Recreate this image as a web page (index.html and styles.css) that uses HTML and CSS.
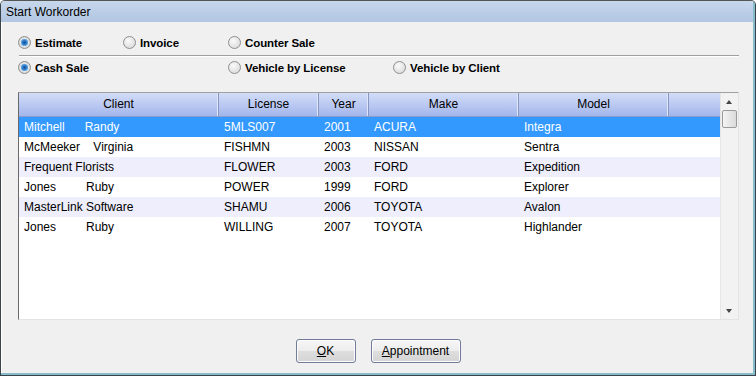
FILE: index.html
```html
<!DOCTYPE html>
<html lang="en">
<head>
  <meta charset="UTF-8" />
  <title>Start Workorder</title>
  <link rel="stylesheet" href="styles.css">
</head>
<body>
  <div class="window">
    <div class="titlebar">Start Workorder</div>

    <div class="client">
      <!-- Workorder type -->
      <div class="radio-row">
        <label class="radio w105"><span class="dot checked"></span>Estimate</label>
        <label class="radio w105"><span class="dot"></span>Invoice</label>
        <label class="radio"><span class="dot"></span>Counter Sale</label>
      </div>
      <div class="separator"></div>
      <div class="radio-row">
        <label class="radio w210"><span class="dot checked"></span>Cash Sale</label>
        <label class="radio w165"><span class="dot"></span>Vehicle by License</label>
        <label class="radio"><span class="dot"></span>Vehicle by Client</label>
      </div>

      <!-- Client list -->
      <div class="list">
        <div class="list-main">
          <div class="row header">
            <div class="c-client">Client</div>
            <div class="c-license">License</div>
            <div class="c-year">Year</div>
            <div class="c-make">Make</div>
            <div class="c-model">Model</div>
            <div class="c-fill"></div>
          </div>
          <div class="row selected">
            <div class="c-client">Mitchell      Randy</div>
            <div class="c-license">5MLS007</div>
            <div class="c-year">2001</div>
            <div class="c-make">ACURA</div>
            <div class="c-model">Integra</div>
            <div class="c-fill"></div>
          </div>
          <div class="row">
            <div class="c-client">McMeeker    Virginia</div>
            <div class="c-license">FISHMN</div>
            <div class="c-year">2003</div>
            <div class="c-make">NISSAN</div>
            <div class="c-model">Sentra</div>
            <div class="c-fill"></div>
          </div>
          <div class="row alt">
            <div class="c-client">Frequent Florists</div>
            <div class="c-license">FLOWER</div>
            <div class="c-year">2003</div>
            <div class="c-make">FORD</div>
            <div class="c-model">Expedition</div>
            <div class="c-fill"></div>
          </div>
          <div class="row">
            <div class="c-client">Jones         Ruby</div>
            <div class="c-license">POWER</div>
            <div class="c-year">1999</div>
            <div class="c-make">FORD</div>
            <div class="c-model">Explorer</div>
            <div class="c-fill"></div>
          </div>
          <div class="row alt">
            <div class="c-client">MasterLink Software</div>
            <div class="c-license">SHAMU</div>
            <div class="c-year">2006</div>
            <div class="c-make">TOYOTA</div>
            <div class="c-model">Avalon</div>
            <div class="c-fill"></div>
          </div>
          <div class="row">
            <div class="c-client">Jones         Ruby</div>
            <div class="c-license">WILLING</div>
            <div class="c-year">2007</div>
            <div class="c-make">TOYOTA</div>
            <div class="c-model">Highlander</div>
            <div class="c-fill"></div>
          </div>
        </div>
        <div class="scrollbar">
          <div class="arrow up"></div>
          <div class="thumb"></div>
          <div class="track"></div>
          <div class="arrow down"></div>
        </div>
      </div>

      <div class="buttons">
        <button class="button ok"><u>O</u>K</button>
        <button class="button appt"><u>A</u>ppointment</button>
      </div>
    </div>
  </div>
</body>
</html>
```

FILE: styles.css
```css
html, body {
  margin: 0;
  padding: 0;
}

body {
  width: 756px;
  height: 376px;
  overflow: hidden;
  font-family: "Liberation Sans", Arial, sans-serif;
  font-size: 12px;
  color: #000;
}

.window {
  width: 756px;
  height: 376px;
  box-sizing: border-box;
  border: 1px solid #3a4448;
  border-top-color: #555;
  border-radius: 5px 5px 0 0;
  background: #f0f0f0;
  box-shadow: inset -2px -2px 0 #86bccb, inset 1px 0 0 #fff;
  display: flex;
  flex-direction: column;
  overflow: hidden;
}

.titlebar {
  height: 21px;
  line-height: 22px;
  padding-left: 5px;
  background: linear-gradient(#c7d7ec, #b2c6e2);
  border-right: 2px solid #86bccb;
  color: #000;
}

.client {
  flex: 1;
  padding: 12px 16px 0 17px;
  display: flex;
  flex-direction: column;
}

.radio-row {
  display: flex;
  align-items: center;
  height: 17px;
}

.radio {
  display: flex;
  align-items: center;
  font-weight: bold;
  font-size: 11.5px;
  letter-spacing: -0.1px;
}

.w105 { width: 105px; }
.w165 { width: 165px; }
.w210 { width: 210px; }

.dot {
  width: 11px;
  height: 11px;
  border: 1px solid #8e8f8f;
  border-radius: 50%;
  background: radial-gradient(circle at 40% 35%, #fafafa, #d4d4d4);
  margin-right: 4px;
  flex: none;
}

.dot.checked {
  background: radial-gradient(circle, #0f4f9a 0, #3a86d0 2.5px, #7bb6e8 3.5px, #e6e6e6 4px, #cfcfcf 6px);
}

.separator {
  height: 1px;
  background: #a0a0a0;
  border-bottom: 1px solid #fff;
  margin: 4px 0 2px 1px;
}

.list {
  margin-top: 16px;
  height: 228px;
  box-sizing: border-box;
  border: 1px solid #e3e3e3;
  border-top-color: #a0a0a0;
  border-left-color: #696969;
  background: #fff;
  display: flex;
}

.list-main {
  flex: 1;
}

.row {
  display: flex;
  height: 20px;
  line-height: 20px;
}

.row > div {
  box-sizing: border-box;
  padding-left: 5px;
  white-space: pre;
  overflow: hidden;
}

.c-client { width: 200px; }
.c-license { width: 100px; }
.c-year { width: 50px; }
.c-make { width: 150px; }
.c-model { width: 150px; }
.c-fill { flex: 1; }

.row.header {
  height: 24px;
  line-height: 22px;
  background: linear-gradient(#d3ddf8, #a3b6ec);
  border-bottom: 1px solid #8a9cc9;
  box-sizing: border-box;
}

.row.header > div {
  text-align: center;
  padding-left: 0;
  border-right: 1px solid #8797c0;
  box-shadow: inset -1px 0 0 #dfe6fa;
}

.row.header > .c-fill {
  border-right: none;
  box-shadow: none;
}

.row.selected {
  background: #3399ff;
  color: #fff;
}

.row.alt {
  background: #eeeefd;
}

.scrollbar {
  width: 17px;
  background: #f2f2f2;
  border-left: 1px solid #e6e6e6;
  display: flex;
  flex-direction: column;
  align-items: center;
}

.arrow {
  height: 17px;
  width: 17px;
  position: relative;
}

.arrow::after {
  content: "";
  position: absolute;
  left: 5px;
  border-left: 3.5px solid transparent;
  border-right: 3.5px solid transparent;
}

.arrow.up::after {
  top: 7px;
  border-bottom: 4px solid #444;
}

.arrow.down::after {
  top: 7px;
  border-top: 4px solid #444;
}

.thumb {
  width: 13px;
  height: 16px;
  border: 1px solid #9a9a9a;
  border-radius: 2px;
  background: linear-gradient(90deg, #f4f4f4, #dadada);
}

.track {
  flex: 1;
}

.buttons {
  display: flex;
  justify-content: center;
  gap: 15px;
  margin-top: 19px;
  padding-right: 1px;
}

.button {
  height: 24px;
  box-sizing: border-box;
  border: 1px solid #707c98;
  border-radius: 3px;
  background: linear-gradient(#f7f7f7 0%, #ececec 50%, #dedede 51%, #d4d4d4 100%);
  box-shadow: inset 0 0 0 1px #fcfcfc;
  font-family: "Liberation Sans", Arial, sans-serif;
  font-size: 12px;
  color: #000;
  padding: 0;
}

.ok { width: 60px; }
.appt { width: 90px; }
```
